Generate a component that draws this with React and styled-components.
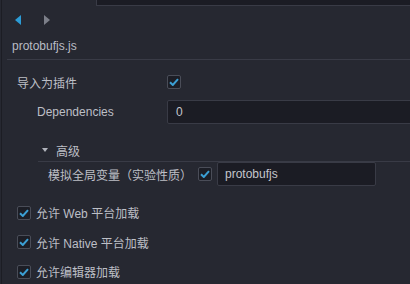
import styled, { createGlobalStyle } from "styled-components";

const Global = createGlobalStyle`
    html, body {
        margin:0;
        padding:0;
        background:#262831;
    }
    body {
        font-family:"Liberation Sans", "Noto Sans CJK SC", sans-serif;
        font-size:12px;
        color:#bdbfc6;
    }
`

const Panel = styled.div`
    width:410px;
    height:284px;
    overflow:hidden;
    background:#262831;
    box-sizing:border-box;
    border-left:1px solid #262831;
`
const Body = styled.div`
    min-height:100%;
    border-left:1px solid #1c1d24;
    display:flex;
    flex-direction:column;
    & > * {
        flex-shrink:0;
    }
`
const TopStub = styled.div`
    height:5px;
    margin-left:94px;
    background:#1b1c24;
    border-left:1px solid #393b46;
    border-bottom:1px solid #393b46;
`
const NavRow = styled.div`
    display:flex;
    align-items:center;
    gap:23px;
    padding:9px 0 0 13px;
    height:10px;
`
const Arrow = styled.span`
    width:0;
    height:0;
    border-top:5px solid transparent;
    border-bottom:5px solid transparent;
    ${p => p.$left
        ? `border-right:6px solid #2c9cd6;`
        : `border-left:6px solid #7c7f89;`}
`
const Title = styled.div`
    margin:11px 0 0 5px;
    padding:0 0 3px 5px;
    height:20px;
    line-height:20px;
    border-bottom:1px solid #393b46;
    color:#b9bcc4;
`
const Row = styled.div`
    display:flex;
    align-items:center;
    height:${p => p.$h || 24}px;
    margin-top:${p => p.$mt || 0}px;
    padding-left:${p => p.$indent || 15}px;
`
const Label = styled.div`
    width:${p => p.$w}px;
    flex:none;
    white-space:nowrap;
`
const Check = styled.span`
    width:12px;
    height:12px;
    flex:none;
    border:1px solid #4a4d58;
    border-radius:2px;
    background:#1c1e26;
    display:flex;
    align-items:center;
    justify-content:center;
    margin-right:${p => p.$mr || 0}px;
`
const Input = styled.div`
    box-sizing:border-box;
    height:24px;
    flex:${p => p.$w ? "none" : "1"};
    width:${p => p.$w ? p.$w + "px" : "auto"};
    margin-right:${p => p.$w ? 0 : -10}px;
    background:#1b1c24;
    border:1px solid #393b46;
    border-radius:2px;
    padding-left:${p => p.$w ? 7 : 8}px;
    line-height:22px;
    color:#c4c6cc;
`
const Advanced = styled.div`
    display:flex;
    align-items:center;
    gap:8px;
    margin:16px 0 0 36px;
    padding-left:4px;
    height:20px;
    padding-bottom:1px;
    border-bottom:1px solid #393b46;
`
const Caret = styled.span`
    width:0;
    height:0;
    border-left:3.5px solid transparent;
    border-right:3.5px solid transparent;
    border-top:4px solid #b0b3bb;
`
const Toggles = styled.div`
    display:flex;
    flex-direction:column;
    margin-top:12px;
`
const Toggle = styled.div`
    display:flex;
    align-items:center;
    gap:5px;
    height:29.5px;
    padding-left:15px;
`

const Tick = () => (
    <svg width="10" height="8" viewBox="0 0 10 8">
        <path d="M1 4.2 L3.8 7 L9 1.2" fill="none" stroke="#3b9fd4" strokeWidth="2" />
    </svg>
)

const toggles = ["允许 Web 平台加载", "允许 Native 平台加载", "允许编辑器加载"]

const App = () => {
    return (
        <>
            <Global />
            <Panel>
                <Body>
                    <TopStub />
                    <NavRow>
                        <Arrow $left />
                        <Arrow />
                    </NavRow>
                    <Title>protobufjs.js</Title>
                    <Row $mt={11} $h={22}>
                        <Label $w={150}>导入为插件</Label>
                        <Check><Tick /></Check>
                    </Row>
                    <Row $mt={7} $indent={35}>
                        <Label $w={130}>Dependencies</Label>
                        <Input>0</Input>
                    </Row>
                    <Advanced>
                        <Caret />
                        高级
                    </Advanced>
                    <Row $indent={46}>
                        <Label $w={150}>模拟全局变量（实验性质）</Label>
                        <Check $mr={5}><Tick /></Check>
                        <Input $w={159}>protobufjs</Input>
                    </Row>
                    <Toggles>
                        {toggles.map(t =>
                            <Toggle key={t}><Check><Tick /></Check>{t}</Toggle>)}
                    </Toggles>
                </Body>
            </Panel>
        </>
    )
}
export default App
